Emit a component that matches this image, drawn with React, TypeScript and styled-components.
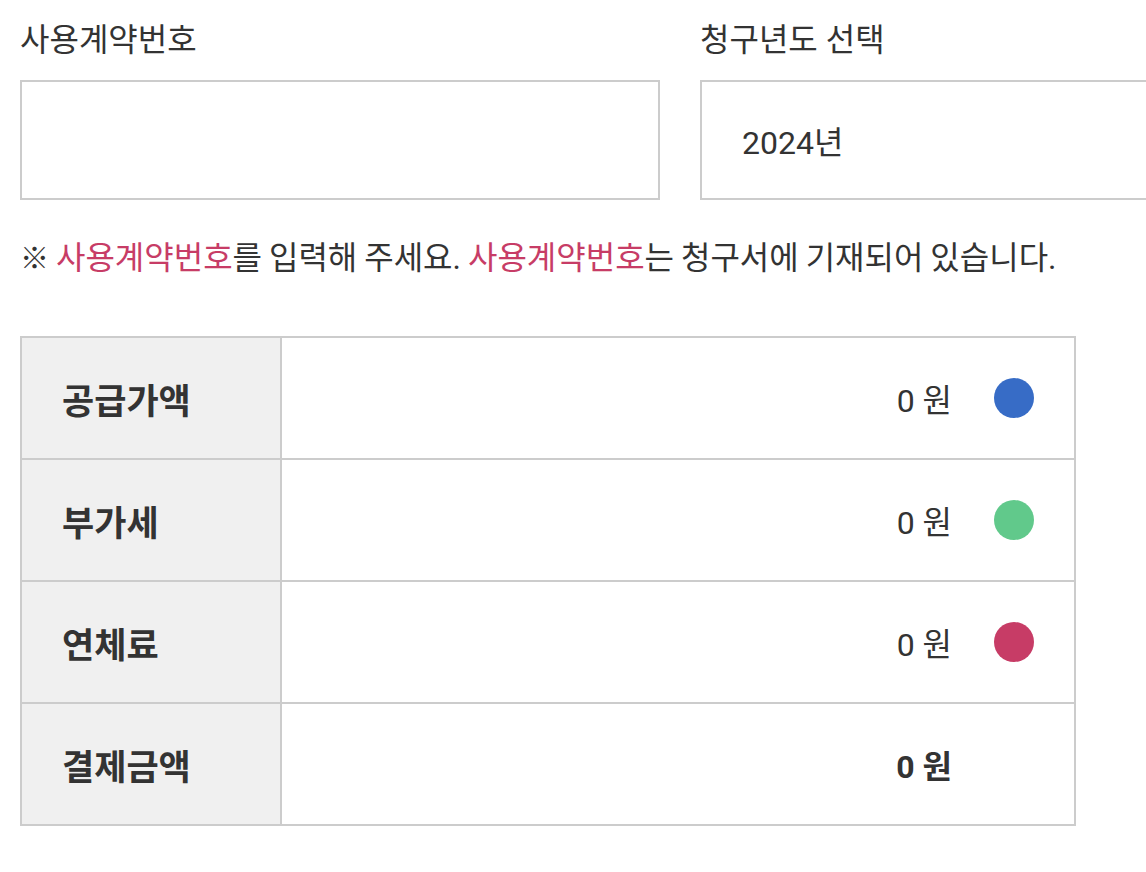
import styled, { createGlobalStyle } from 'styled-components';

const GlobalStyle = createGlobalStyle`
    body {
        margin: 0;
        background: #ffffff;
        font-family: Roboto, 'Noto Sans CJK KR', 'Noto Sans', sans-serif;
        color: #333333;
    }
`;

interface AmountRow {
    label: string;
    amount: string;
    dot: string | null;
}

const rows: AmountRow[] = [
    { label: '공급가액', amount: '0 원', dot: '#376cc6' },
    { label: '부가세', amount: '0 원', dot: '#61c98b' },
    { label: '연체료', amount: '0 원', dot: '#c73c66' },
    { label: '결제금액', amount: '0 원', dot: null },
];

const App: React.FC = () => {
    return (
        <>
            <GlobalStyle />
            <Page>
                <FieldRow>
                    <Field>
                        <Label>사용계약번호</Label>
                        <InputBox />
                    </Field>
                    <Field>
                        <Label>청구년도 선택</Label>
                        <InputBox>2024년</InputBox>
                    </Field>
                </FieldRow>
                <Notice>
                    <Mark>※</Mark> <Accent>사용계약번호</Accent>를 입력해 주세요. <Accent>사용계약번호</Accent>는 청구서에 기재되어 있습니다.
                </Notice>
                <AmountTable>
                    {rows.map((row) => (
                        <Row key={row.label}>
                            <HeadCell>{row.label}</HeadCell>
                            <ValueCell>
                                <Amount $bold={row.dot === null}>{row.amount}</Amount>
                                <Dot $color={row.dot} />
                            </ValueCell>
                        </Row>
                    ))}
                </AmountTable>
            </Page>
        </>
    );
};
export default App;

const Page = styled.div`
    padding: 20px;
    display: flex;
    flex-direction: column;
    overflow: hidden;
`;

const FieldRow = styled.div`
    display: flex;
    flex-direction: row;
    gap: 40px;
`;

const Field = styled.div`
    display: flex;
    flex-direction: column;
    gap: 20px;
    width: 640px;
    flex-shrink: 0;
`;

const Label = styled.div`
    font-size: 32px;
    line-height: 40px;
    color: #333333;
`;

const InputBox = styled.div`
    box-sizing: border-box;
    height: 120px;
    border: 2px solid #cccccc;
    display: flex;
    align-items: center;
    padding: 0 40px;
    font-size: 32px;
    color: #333333;
`;

const Notice = styled.div`
    margin-top: 38px;
    height: 40px;
    font-size: 32px;
    line-height: 40px;
    color: #333333;
    white-space: nowrap;
    word-spacing: -1px;
`;

const Mark = styled.span`
    font-size: 29px;
    line-height: 1;
`;

const Accent = styled.span`
    color: #c73c66;
`;

const AmountTable = styled.div`
    margin-top: 58px;
    width: 1056px;
    box-sizing: border-box;
    display: grid;
    grid-template-columns: 258px 792px;
    gap: 2px;
    padding: 2px;
    background: #cccccc;
`;

const Row = styled.div`
    display: contents;
`;

const HeadCell = styled.div`
    height: 120px;
    background: #f0f0f0;
    display: flex;
    align-items: center;
    padding-left: 40px;
    font-size: 35px;
    font-weight: 700;
    color: #333333;
`;

const ValueCell = styled.div`
    height: 120px;
    background: #ffffff;
    display: flex;
    align-items: center;
    justify-content: flex-end;
    gap: 42px;
    padding-right: 40px;
`;

const Amount = styled.div<{ $bold: boolean }>`
    font-size: 32px;
    font-weight: ${({ $bold }) => ($bold ? 700 : 400)};
    color: #333333;
`;

const Dot = styled.div<{ $color: string | null }>`
    width: 40px;
    height: 40px;
    border-radius: 50%;
    background: ${({ $color }) => $color ?? 'transparent'};
`;
